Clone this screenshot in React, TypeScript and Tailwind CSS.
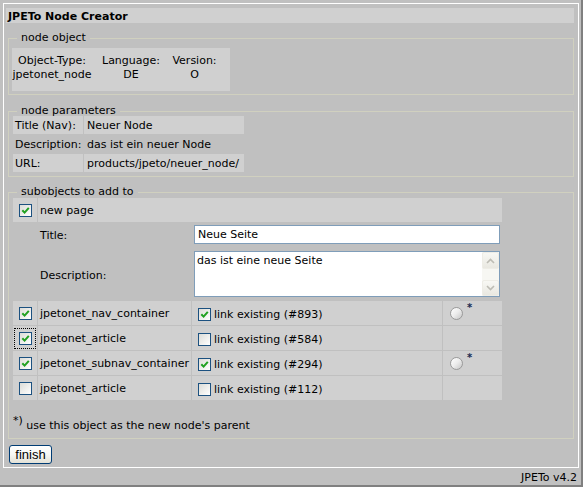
import React from "react";

function Check({ checked }: { checked: boolean }) {
  return (
    <span className="inline-flex h-[13px] w-[13px] shrink-0 items-center justify-center border border-[#1c5180] bg-linear-to-br from-[#dcdcd7] to-white align-middle">
      {checked && (
        <svg width="9" height="9" viewBox="0 0 9 9">
          <path d="M1.3 4.2 L3.6 6.6 L7.8 1.8" stroke="#21a121" strokeWidth="2" fill="none" />
        </svg>
      )}
    </span>
  );
}

function Radio() {
  return (
    <span className="inline-block h-[13px] w-[13px] shrink-0 rounded-full border border-[#9a9a9a] bg-linear-to-br from-white via-[#ececec] to-[#c6c6c6]" />
  );
}

function Chevron({ up }: { up: boolean }) {
  return (
    <svg width="9" height="6" viewBox="0 0 9 6">
      <path d={up ? "M1 5 L4.5 1.5 L8 5" : "M1 1 L4.5 4.5 L8 1"} stroke="#bdbcb4" strokeWidth="1.6" fill="none" />
    </svg>
  );
}

const objects = [
  { name: "jpetonet_nav_container", c1: true, c2: true, id: "893", radio: true, focus: false },
  { name: "jpetonet_article", c1: true, c2: false, id: "584", radio: false, focus: true },
  { name: "jpetonet_subnav_container", c1: true, c2: true, id: "294", radio: true, focus: false },
  { name: "jpetonet_article", c1: false, c2: false, id: "112", radio: false, focus: false },
];

export default function App() {
  return (
    <div className="h-[487px] w-[583px] overflow-hidden border-b-2 border-r-2 border-[#808080] bg-[#c0c0c0] font-['DejaVu_Sans',Verdana,sans-serif] text-[11px] leading-[13px] text-black">
      <div className="ml-[3px] mt-[3px] h-[465px] w-[576px] border border-white pl-[2px] pr-[4px] pt-[4px]">
        <div className="h-[15px] bg-[#d0d0d0] pl-[2px] pt-[1px] font-bold leading-[15px]">JPETo Node Creator</div>

        <fieldset className="ml-[2px] mt-[9px] border border-[#d0d0bf] pb-[3px] pl-[3px]">
          <legend className="ml-[5px] px-[4px] leading-[12px]">node object</legend>
          <div className="mt-[4px] h-[43px] w-[218px] bg-[#d0d0d0] pt-[6px]">
            <div className="grid grid-cols-[80px_78px_49px] text-center leading-[14px]">
              <div>Object-Type:</div>
              <div>Language:</div>
              <div>Version:</div>
              <div>jpetonet_node</div>
              <div>DE</div>
              <div>O</div>
            </div>
          </div>
        </fieldset>

        <fieldset className="ml-[2px] mt-[10px] border border-[#d0d0bf] pb-[3px] pl-[3px]">
          <legend className="ml-[5px] px-[4px] leading-[12px]">node parameters</legend>
          <table className="-mt-[2px] w-[233px] table-fixed border-separate border-spacing-[1px]">
            <colgroup>
              <col className="w-[70px]" />
              <col className="w-[160px]" />
            </colgroup>
            <tbody>
              <tr>
                <td className="h-[18px] whitespace-nowrap bg-[#d0d0d0] p-0 pl-[2px] pt-[1px]">Title (Nav):</td>
                <td className="h-[18px] whitespace-nowrap bg-[#d0d0d0] p-0 pl-[3px] pt-[1px]">Neuer Node</td>
              </tr>
              <tr>
                <td className="h-[18px] whitespace-nowrap p-0 pl-[2px] pt-[1px]">Description:</td>
                <td className="h-[18px] whitespace-nowrap p-0 pl-[3px] pt-[1px]">das ist ein neuer Node</td>
              </tr>
              <tr>
                <td className="h-[18px] whitespace-nowrap bg-[#d0d0d0] p-0 pl-[2px] pt-[1px]">URL:</td>
                <td className="h-[18px] whitespace-nowrap bg-[#d0d0d0] p-0 pl-[3px] pt-[1px]">products/jpeto/neuer_node/</td>
              </tr>
            </tbody>
          </table>
        </fieldset>

        <fieldset className="ml-[2px] mt-[9px] border border-[#d0d0bf] pb-[5px] pl-[3px]">
          <legend className="ml-[5px] px-[4px] leading-[12px]">subobjects to add to</legend>
          <table className="-mt-[1px] w-[491px] table-fixed border-separate border-spacing-[1px]">
            <colgroup>
              <col className="w-[24px]" />
              <col className="w-[153px]" />
              <col className="w-[250px]" />
              <col className="w-[59px]" />
            </colgroup>
            <tbody>
              <tr>
                <td className="h-[24px] bg-[#d0d0d0] p-0 text-center align-middle">
                  <div className="flex justify-center">
                    <Check checked />
                  </div>
                </td>
                <td colSpan={3} className="h-[24px] bg-[#d0d0d0] p-0 pl-[2px] pt-[1px] align-middle">
                  new page
                </td>
              </tr>
              <tr>
                <td className="h-[23px] p-0" />
                <td className="h-[23px] p-0 pl-[2px] pt-[2px] align-middle">Title:</td>
                <td colSpan={2} className="h-[23px] p-0 pl-[2px] align-middle">
                  <div className="h-[19px] w-[306px] border border-[#7f9db9] bg-white pl-[3px] leading-[17px]">Neue Seite</div>
                </td>
              </tr>
              <tr>
                <td className="h-[53px] p-0" />
                <td className="h-[53px] p-0 pl-[2px] pt-[3px] align-middle">Description:</td>
                <td colSpan={2} className="h-[53px] p-0 pl-[2px] pt-[4px] align-top">
                  <div className="flex h-[46px] w-[306px] border border-[#7f9db9] bg-white">
                    <div className="flex-1 pl-[2px] pt-[2px]">das ist eine neue Seite</div>
                    <div className="flex w-[17px] flex-col bg-[#f7f7f3]">
                      <div className="flex h-[17px] items-center justify-center rounded-[2px] border border-[#eeede6] bg-linear-to-b from-[#f8f8f4] to-[#e9e8e1]">
                        <Chevron up />
                      </div>
                      <div className="flex-1" />
                      <div className="flex h-[16px] items-center justify-center rounded-[2px] border border-[#eeede6] bg-linear-to-b from-[#f8f8f4] to-[#e9e8e1]">
                        <Chevron up={false} />
                      </div>
                    </div>
                  </div>
                </td>
              </tr>
              {objects.map((o, i) => (
                <tr key={i}>
                  <td className="h-[24px] bg-[#d0d0d0] p-0 align-middle">
                    {o.focus ? (
                      <div className="ml-[1px] inline-flex border border-dotted border-black pb-[3px] pl-[4px] pr-[3px] pt-[3px]">
                        <Check checked={o.c1} />
                      </div>
                    ) : (
                      <div className="flex justify-center">
                        <Check checked={o.c1} />
                      </div>
                    )}
                  </td>
                  <td className="h-[24px] whitespace-nowrap bg-[#d0d0d0] p-0 pl-[2px] align-middle">{o.name}</td>
                  <td className="h-[24px] bg-[#d0d0d0] p-0 pl-[2px] align-middle">
                    <div className="flex items-center pt-[2px]">
                      <span className="ml-[4px]">
                        <Check checked={o.c2} />
                      </span>
                      <span className="ml-[3px] whitespace-nowrap">link existing (#{o.id})</span>
                    </div>
                  </td>
                  <td className="h-[24px] bg-[#d0d0d0] p-0 pl-[2px] align-middle">
                    {o.radio && (
                      <div className="flex items-center">
                        <span className="ml-[5px] flex">
                          <Radio />
                        </span>
                        <span className="relative -top-[5px] ml-[4px] text-[10px] font-bold leading-[10px] text-[#1a2a50]">*</span>
                      </div>
                    )}
                  </td>
                </tr>
              ))}
            </tbody>
          </table>
          <div className="ml-[1px] mt-[18px] h-[14px] whitespace-nowrap leading-[14px]">
            <span className="relative -top-[5px]">*)</span> use this object as the new node's parent
          </div>
        </fieldset>

        <button className="ml-[3px] mt-[6px] flex h-[19px] w-[43px] items-center justify-center rounded-[3px] border border-[#003c74] bg-linear-to-b from-white via-[#f7f7f4] to-[#e3e1d6] font-['Liberation_Sans',Arial,sans-serif] text-[13px] leading-[15px] text-black">
          finish
        </button>
      </div>
      <div className="flex h-[17px] items-center justify-end pr-[4px] pt-[1px]">JPETo v4.2</div>
    </div>
  );
}
